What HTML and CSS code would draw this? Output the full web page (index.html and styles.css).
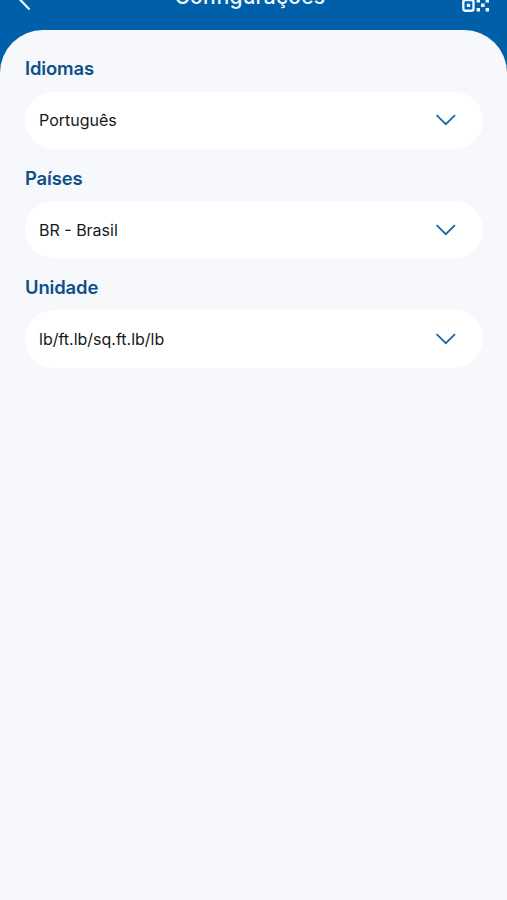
FILE: index.html
```html
<!DOCTYPE html>
<html lang="pt-BR">
<head>
<meta charset="utf-8">
<title>Configurações</title>
<link rel="stylesheet" href="styles.css">
</head>
<body>
<header class="topbar">
  <svg class="back" width="14" height="26" viewBox="0 0 14 26" fill="none" stroke="currentColor" stroke-width="2.2"><path d="M12.5 1.5 1.5 13l11 11.5"/></svg>
  <h1 class="title">Configurações</h1>
  <svg class="qr" width="28" height="28" viewBox="0 0 28 28" fill="none" stroke="currentColor" stroke-width="2.4">
    <rect x="1.3" y="1.1" width="10.2" height="10" rx="2"/><rect x="16.3" y="1.1" width="10.2" height="10" rx="2"/><rect x="1.3" y="16.1" width="10.2" height="10.6" rx="2"/>
    <path fill="currentColor" stroke="none" d="M5 4.6h3v3H5zM20 4.6h3v3h-3zM4.8 19.8h3.4V23H4.8zM14.6 15.4h3.4v3.2h-3.4zM23.6 15.4H27v3.2h-3.4zM19 19.5h3.6v3.6H19zM14.6 24H18v3.4h-3.4zM23.6 24H27v3.4h-3.4z"/>
  </svg>
</header>
<main class="panel">
  <section class="field">
    <h2 class="label">Idiomas</h2>
    <button class="select"><span class="value">Português</span><svg class="chevron" width="22" height="14" viewBox="0 0 22 14"><path d="M1.6 2.2 10.8 11.2 20 2.2"/></svg></button>
  </section>
  <section class="field">
    <h2 class="label">Países</h2>
    <button class="select"><span class="value">BR - Brasil</span><svg class="chevron" width="22" height="14" viewBox="0 0 22 14"><path d="M1.6 2.2 10.8 11.2 20 2.2"/></svg></button>
  </section>
  <section class="field">
    <h2 class="label">Unidade</h2>
    <button class="select"><span class="value">lb/ft.lb/sq.ft.lb/lb</span><svg class="chevron" width="22" height="14" viewBox="0 0 22 14"><path d="M1.6 2.2 10.8 11.2 20 2.2"/></svg></button>
  </section>
</main>
</body>
</html>
```
FILE: styles.css
```css
* { box-sizing: border-box; }
html { height: 100%; overflow: hidden; }
body {
  margin: 0;
  height: 100%;
  display: flex;
  flex-direction: column;
  overflow: hidden;
  background: #005fa9;
  font-family: Inter, "Liberation Sans", sans-serif;
}
.topbar {
  height: 46px;
  margin-top: -16px;
  padding: 0 17.3px 0 17px;
  flex: none;
  display: flex;
  align-items: flex-start;
  justify-content: space-between;
  color: #f0f8ff;
}
.back { margin-top: 1px; }
.title {
  margin: 0;
  padding-left: 7px;
  font-size: 21px;
  line-height: 26px;
  font-weight: 500;
  letter-spacing: 0.2px;
}
.panel {
  flex: 1;
  padding: 25.4px 24px 0 25px;
  border-radius: 43px 43px 0 0;
  background: #f6f8fc;
}
.field { height: 109.3px; }
.label {
  margin: 0 0 10.3px;
  font-size: 18.4px;
  line-height: 26px;
  font-weight: 600;
  letter-spacing: -0.12px;
  color: #0d4f88;
}
.select {
  display: flex;
  align-items: center;
  justify-content: space-between;
  width: 100%;
  height: 57.5px;
  padding: 0 26px 0 14px;
  border: 0;
  border-radius: 29px;
  background: #fff;
  font: inherit;
  color: #17191c;
}
.value { font-size: 16px; line-height: 24px; }
.chevron { fill: none; stroke: #1768aa; stroke-width: 1.8; }
```
